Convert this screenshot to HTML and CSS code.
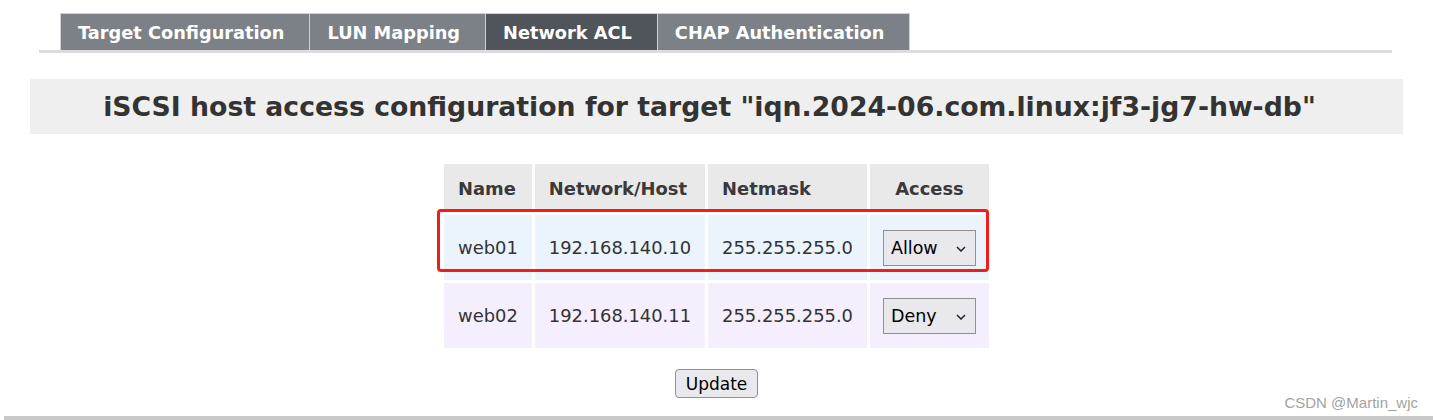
FILE: index.html
```html
<!DOCTYPE html>
<html lang="en">
<head>
<meta charset="utf-8">
<title>Network ACL</title>
<link rel="stylesheet" href="styles.css">
</head>
<body>
<div class="page">
  <nav class="tabs">
    <a class="tab">Target Configuration</a>
    <a class="tab">LUN Mapping</a>
    <a class="tab active">Network ACL</a>
    <a class="tab">CHAP Authentication</a>
  </nav>

  <h1 class="title">iSCSI host access configuration for target "iqn.2024-06.com.linux:jf3-jg7-hw-db"</h1>

  <form class="acl">
    <div class="table-wrap">
      <table class="acl-table">
        <thead>
          <tr><th>Name</th><th>Network/Host</th><th>Netmask</th><th class="center">Access</th></tr>
        </thead>
        <tbody>
          <tr class="row-a">
            <td>web01</td><td>192.168.140.10</td><td>255.255.255.0</td>
            <td class="center"><span class="select"><select><option selected>Allow</option><option>Deny</option></select><svg class="chev" width="10" height="6" viewBox="0 0 10 6"><path d="M1 1 L5 5 L9 1" fill="none" stroke="#222" stroke-width="1.5"/></svg></span></td>
          </tr>
          <tr class="row-b">
            <td>web02</td><td>192.168.140.11</td><td>255.255.255.0</td>
            <td class="center"><span class="select"><select><option>Allow</option><option selected>Deny</option></select><svg class="chev" width="10" height="6" viewBox="0 0 10 6"><path d="M1 1 L5 5 L9 1" fill="none" stroke="#222" stroke-width="1.5"/></svg></span></td>
          </tr>
        </tbody>
      </table>
      <div class="highlight"></div>
    </div>
    <div class="actions"><button type="button" class="btn">Update</button></div>
  </form>

  <div class="footer-bar"></div>
  <div class="watermark">CSDN @Martin_wjc</div>
</div>
</body>
</html>
```
FILE: styles.css
```css
html, body {
  margin: 0;
  padding: 0;
  background: #fff;
}
body {
  font-family: "DejaVu Sans", Verdana, sans-serif;
  color: #333;
}
.page {
  position: relative;
  height: 420px;
  overflow: hidden;
  padding-top: 13px;
  box-sizing: border-box;
}

/* Tabs */
.tabs {
  display: flex;
  margin: 0 41px 0 39px;
  padding-left: 21px;
  border-bottom: 3px solid #dcdcdc;
}
.tab {
  display: block;
  height: 37px;
  box-sizing: border-box;
  line-height: 38px;
  padding: 0 25px 0 17px;
  background: #7b8186;
  color: #fff;
  font-weight: bold;
  font-size: 17.75px;
  border: 1px solid #d2d2d2;
  border-bottom: 0;
  border-left-width: 0;
  white-space: nowrap;
  overflow: hidden;
}
.tab:first-child {
  border-left-width: 1px;
}
.tab.active {
  background: #4f555a;
}

/* Title */
.title {
  margin: 26px 30px 0 30px;
  height: 55px;
  line-height: 55px;
  background: #efefef;
  font-size: 26.7px;
  font-weight: bold;
  color: #333;
  text-align: center;
  padding-right: 14px;
  white-space: nowrap;
}

/* Table */
.acl {
  margin: 27px 0 0 0;
}
.table-wrap {
  position: relative;
  width: max-content;
  margin: 0 auto;
}
.acl-table {
  border-collapse: separate;
  border-spacing: 3px;
  font-size: 17.9px;
}
.acl-table th,
.acl-table td {
  padding: 0 14px;
  text-align: left;
  white-space: nowrap;
}
.acl-table th {
  height: 48px;
  background: #e9e9e9;
  font-weight: bold;
  color: #3a3a3a;
}
.acl-table td {
  height: 65px;
}
.acl-table .center {
  text-align: center;
  padding: 0 13px;
}
.row-a td { background: #ebf4fc; }
.row-b td { background: #f5eefc; }

.select {
  position: relative;
  display: inline-block;
  vertical-align: middle;
}
.select select {
  appearance: none;
  -webkit-appearance: none;
  width: 93px;
  height: 36px;
  margin: 0;
  padding: 0 0 0 7px;
  border: 1px solid #919191;
  border-radius: 0;
  background: #e9e9ed;
  color: #000;
  font-family: "DejaVu Sans", Verdana, sans-serif;
  font-size: 17.5px;
  display: block;
}
.chev {
  position: absolute;
  right: 10px;
  top: 16px;
  pointer-events: none;
}

.highlight {
  position: absolute;
  left: -4px;
  top: 48px;
  width: 552px;
  height: 63px;
  box-sizing: border-box;
  border: 3px solid #f21d1a;
  border-radius: 4px;
}

.actions {
  margin-top: 18px;
  text-align: center;
}
.btn {
  height: 29px;
  padding: 0 10px;
  border: 1px solid #8f8f9d;
  border-radius: 4px;
  background: #e9e9ed;
  color: #000;
  font-family: "DejaVu Sans", Verdana, sans-serif;
  font-size: 17px;
}

.footer-bar {
  position: absolute;
  left: 4px;
  right: 0;
  bottom: 0;
  height: 4px;
  background: #c8c8c8;
}
.watermark {
  position: absolute;
  right: 15px;
  top: 394px;
  font-family: "Liberation Sans", Arial, sans-serif;
  font-size: 15px;
  color: #a3a3a3;
}
```
